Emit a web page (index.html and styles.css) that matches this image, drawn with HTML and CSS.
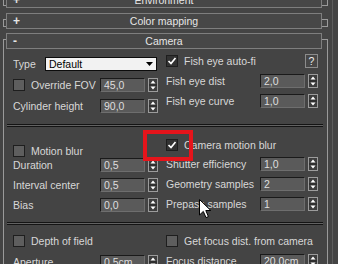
FILE: index.html
```html
<!DOCTYPE html>
<html lang="en">
<head>
    <meta charset="UTF-8">
    <meta name="viewport" content="width=device-width, initial-scale=1.0">
    <title>Camera</title>
    <link rel="stylesheet" href="styles.css">
</head>
<body>
    <div id="panel">
        <div class="rollout rollout-closed" id="env-rollout">
            <div class="rollout-head"><span class="sign">+</span><span class="title">Environment</span></div>
        </div>
        <div class="rollout rollout-closed" id="cmap-rollout">
            <div class="rollout-head"><span class="sign">+</span><span class="title">Color mapping</span></div>
        </div>

        <div class="rollout rollout-open" id="camera-rollout">
            <div class="rollout-head"><span class="sign">-</span><span class="title">Camera</span></div>

            <!-- general -->
            <div class="section" id="general-section">
                <div class="col col-left">
                    <div class="row">
                        <span class="label">Type</span>
                        <div class="dropdown">
                            <span>Default</span>
                            <svg width="7" height="4" viewBox="0 0 7 4"><polygon points="0,0 7,0 3.5,4" fill="#000"/></svg>
                        </div>
                    </div>
                    <div class="row">
                        <span class="check"></span>
                        <span class="label label-check">Override FOV</span>
                        <div class="field">45,0</div>
                        <svg class="spin" width="10" height="14" viewBox="0 0 10 14"><rect x="0.5" y="0.5" width="9" height="13" fill="#3d3d3d" stroke="#9c9c9c"/><line x1="1" y1="7" x2="9" y2="7" stroke="#222"/><polygon points="5,2.5 7.5,5.5 2.5,5.5" fill="#fff"/><polygon points="2.5,8.5 7.5,8.5 5,11.5" fill="#fff"/></svg>
                    </div>
                    <div class="row">
                        <span class="label">Cylinder height</span>
                        <div class="field">90,0</div>
                        <svg class="spin" width="10" height="14" viewBox="0 0 10 14"><rect x="0.5" y="0.5" width="9" height="13" fill="#3d3d3d" stroke="#9c9c9c"/><line x1="1" y1="7" x2="9" y2="7" stroke="#222"/><polygon points="5,2.5 7.5,5.5 2.5,5.5" fill="#fff"/><polygon points="2.5,8.5 7.5,8.5 5,11.5" fill="#fff"/></svg>
                    </div>
                </div>
                <div class="col col-right">
                    <div class="row">
                        <span class="check on"><svg width="10" height="10" viewBox="0 0 10 10"><polyline points="1.5,5 4,7.5 8.5,2" fill="none" stroke="#fff" stroke-width="1.7"/></svg></span>
                        <span class="label label-check">Fish eye auto-fi</span>
                        <div class="help-btn">?</div>
                    </div>
                    <div class="row">
                        <span class="label">Fish eye dist</span>
                        <div class="field">2,0</div>
                        <svg class="spin" width="10" height="14" viewBox="0 0 10 14"><rect x="0.5" y="0.5" width="9" height="13" fill="#3d3d3d" stroke="#9c9c9c"/><line x1="1" y1="7" x2="9" y2="7" stroke="#222"/><polygon points="5,2.5 7.5,5.5 2.5,5.5" fill="#fff"/><polygon points="2.5,8.5 7.5,8.5 5,11.5" fill="#fff"/></svg>
                    </div>
                    <div class="row">
                        <span class="label">Fish eye curve</span>
                        <div class="field">1,0</div>
                        <svg class="spin" width="10" height="14" viewBox="0 0 10 14"><rect x="0.5" y="0.5" width="9" height="13" fill="#3d3d3d" stroke="#9c9c9c"/><line x1="1" y1="7" x2="9" y2="7" stroke="#222"/><polygon points="5,2.5 7.5,5.5 2.5,5.5" fill="#fff"/><polygon points="2.5,8.5 7.5,8.5 5,11.5" fill="#fff"/></svg>
                    </div>
                </div>
            </div>

            <div class="sep"></div>

            <!-- motion blur -->
            <div class="section" id="motion-section">
                <div class="col col-left">
                    <div class="row">
                        <span class="check"></span>
                        <span class="label label-check">Motion blur</span>
                    </div>
                    <div class="row row-tight">
                        <span class="label">Duration</span>
                        <div class="field">0,5</div>
                        <svg class="spin" width="10" height="14" viewBox="0 0 10 14"><rect x="0.5" y="0.5" width="9" height="13" fill="#3d3d3d" stroke="#9c9c9c"/><line x1="1" y1="7" x2="9" y2="7" stroke="#222"/><polygon points="5,2.5 7.5,5.5 2.5,5.5" fill="#fff"/><polygon points="2.5,8.5 7.5,8.5 5,11.5" fill="#fff"/></svg>
                    </div>
                    <div class="row">
                        <span class="label">Interval center</span>
                        <div class="field">0,5</div>
                        <svg class="spin" width="10" height="14" viewBox="0 0 10 14"><rect x="0.5" y="0.5" width="9" height="13" fill="#3d3d3d" stroke="#9c9c9c"/><line x1="1" y1="7" x2="9" y2="7" stroke="#222"/><polygon points="5,2.5 7.5,5.5 2.5,5.5" fill="#fff"/><polygon points="2.5,8.5 7.5,8.5 5,11.5" fill="#fff"/></svg>
                    </div>
                    <div class="row">
                        <span class="label">Bias</span>
                        <div class="field">0,0</div>
                        <svg class="spin" width="10" height="14" viewBox="0 0 10 14"><rect x="0.5" y="0.5" width="9" height="13" fill="#3d3d3d" stroke="#9c9c9c"/><line x1="1" y1="7" x2="9" y2="7" stroke="#222"/><polygon points="5,2.5 7.5,5.5 2.5,5.5" fill="#fff"/><polygon points="2.5,8.5 7.5,8.5 5,11.5" fill="#fff"/></svg>
                    </div>
                </div>
                <div class="col col-right">
                    <div class="row">
                        <span class="check on"><svg width="10" height="10" viewBox="0 0 10 10"><polyline points="1.5,5 4,7.5 8.5,2" fill="none" stroke="#fff" stroke-width="1.7"/></svg></span>
                        <span class="label label-check">Camera motion blur</span>
                    </div>
                    <div class="row">
                        <span class="label">Shutter efficiency</span>
                        <div class="field">1,0</div>
                        <svg class="spin" width="10" height="14" viewBox="0 0 10 14"><rect x="0.5" y="0.5" width="9" height="13" fill="#3d3d3d" stroke="#9c9c9c"/><line x1="1" y1="7" x2="9" y2="7" stroke="#222"/><polygon points="5,2.5 7.5,5.5 2.5,5.5" fill="#fff"/><polygon points="2.5,8.5 7.5,8.5 5,11.5" fill="#fff"/></svg>
                    </div>
                    <div class="row">
                        <span class="label">Geometry samples</span>
                        <div class="field">2</div>
                        <svg class="spin" width="10" height="14" viewBox="0 0 10 14"><rect x="0.5" y="0.5" width="9" height="13" fill="#3d3d3d" stroke="#9c9c9c"/><line x1="1" y1="7" x2="9" y2="7" stroke="#222"/><polygon points="5,2.5 7.5,5.5 2.5,5.5" fill="#fff"/><polygon points="2.5,8.5 7.5,8.5 5,11.5" fill="#fff"/></svg>
                    </div>
                    <div class="row">
                        <span class="label">Prepass samples</span>
                        <div class="field">1</div>
                        <svg class="spin" width="10" height="14" viewBox="0 0 10 14"><rect x="0.5" y="0.5" width="9" height="13" fill="#3d3d3d" stroke="#9c9c9c"/><line x1="1" y1="7" x2="9" y2="7" stroke="#222"/><polygon points="5,2.5 7.5,5.5 2.5,5.5" fill="#fff"/><polygon points="2.5,8.5 7.5,8.5 5,11.5" fill="#fff"/></svg>
                    </div>
                </div>
            </div>

            <div class="sep"></div>

            <!-- depth of field -->
            <div class="section" id="dof-section">
                <div class="col col-left">
                    <div class="row">
                        <span class="check"></span>
                        <span class="label label-check">Depth of field</span>
                    </div>
                    <div class="row">
                        <span class="label">Aperture</span>
                        <div class="field">0,5cm</div>
                        <svg class="spin" width="10" height="14" viewBox="0 0 10 14"><rect x="0.5" y="0.5" width="9" height="13" fill="#3d3d3d" stroke="#9c9c9c"/><line x1="1" y1="7" x2="9" y2="7" stroke="#222"/><polygon points="5,2.5 7.5,5.5 2.5,5.5" fill="#fff"/><polygon points="2.5,8.5 7.5,8.5 5,11.5" fill="#fff"/></svg>
                    </div>
                </div>
                <div class="col col-right">
                    <div class="row">
                        <span class="check"></span>
                        <span class="label label-check">Get focus dist. from camera</span>
                    </div>
                    <div class="row">
                        <span class="label">Focus distance</span>
                        <div class="field">20,0cm</div>
                        <svg class="spin" width="10" height="14" viewBox="0 0 10 14"><rect x="0.5" y="0.5" width="9" height="13" fill="#3d3d3d" stroke="#9c9c9c"/><line x1="1" y1="7" x2="9" y2="7" stroke="#222"/><polygon points="5,2.5 7.5,5.5 2.5,5.5" fill="#fff"/><polygon points="2.5,8.5 7.5,8.5 5,11.5" fill="#fff"/></svg>
                    </div>
                </div>
            </div>
        </div>

        <!-- annotation + mouse pointer drawn over the panel -->
        <div class="highlight"></div>
        <svg class="cursor" width="13" height="20" viewBox="0 0 13 20"><path d="M0.5,0.5 L0.5,16 L4.3,12.4 L7,18.6 L9.4,17.6 L6.8,11.5 L11.8,11.5 Z" fill="#fff" stroke="#000" stroke-width="1"/></svg>
    </div>
    <div id="scroll-track"></div>
</body>
</html>
```

FILE: styles.css
```css
body {
    margin: 0;
    height: 264px;
    overflow: hidden;
    display: flex;
    background-color: #444;
    font-family: "Liberation Sans", Arial, sans-serif;
    font-size: 10.5px;
    color: #d8d8d8;
}

#panel {
    position: relative;
    width: 332px;
    box-sizing: border-box;
    padding: 0 4px 0 3px;
}

#scroll-track {
    flex: 1;
    border-left: 1px solid #5d5d5d;
}

/* rollouts */
.rollout {
    border: 1px solid #9a9a9a;
}

.rollout-closed {
    height: 8px;
    box-sizing: border-box;
}

.rollout-closed .rollout-head {
    margin: -7px 5px -3px 2px;
}

#env-rollout {
    margin-top: -2px;
}

#cmap-rollout {
    margin-top: 13px;
}

#camera-rollout {
    margin-top: 12px;
    border-bottom: none;
    height: 240px;
}

.rollout-open .rollout-head {
    margin: -7px 5px 0 2px;
}

.rollout-head {
    height: 16px;
    box-sizing: border-box;
    border: 1px solid #7e7e7e;
    background-color: #474747;
    display: grid;
    grid-template-columns: 1fr auto 1fr;
    align-items: center;
    line-height: 14px;
    color: #e6e6e6;
}

.sign {
    padding-left: 6px;
    font-size: 12px;
    font-weight: bold;
}

/* sections */
.section {
    display: flex;
    align-items: flex-start;
    gap: 8px;
    padding: 0 9px;
}

.col {
    display: flex;
    flex-direction: column;
    gap: 6px;
}

.col-left {
    width: 145px;
}

.col-right {
    width: 152px;
}

#general-section {
    padding-bottom: 11px;
}

#general-section .col-left {
    padding-top: 8px;
    gap: 7px;
}

#general-section .col-right {
    padding-top: 5px;
}

#motion-section {
    padding-bottom: 10px;
}

#motion-section .col-left {
    padding-top: 17px;
}

#motion-section .col-right {
    padding-top: 11px;
}

#motion-section .col-right .row:first-child {
    margin-bottom: -1px;
}

.row-tight {
    margin-top: -6px;
}

#dof-section .col-left {
    padding-top: 9px;
    gap: 7px;
}

#dof-section .col-right {
    padding-top: 9px;
}

.sep {
    height: 1px;
    margin: 0 4px 0 3px;
    background-color: #626262;
    border-top: 1px solid #141414;
    border-bottom: 1px solid #141414;
}

/* controls */
.row {
    display: flex;
    align-items: center;
    height: 14px;
    line-height: 14px;
}

.label {
    flex: 1;
    white-space: nowrap;
    overflow: hidden;
}

.label-check {
    margin-left: 6px;
}

.check {
    flex: none;
    width: 12px;
    height: 12px;
    box-sizing: border-box;
    border: 1px solid #1e1e1e;
    background-color: #5e5e5e;
    display: flex;
    align-items: center;
    justify-content: center;
}

.check.on {
    background-color: #323232;
}

.field {
    flex: none;
    width: 45px;
    height: 14px;
    box-sizing: border-box;
    padding-left: 3px;
    line-height: 12px;
    background-color: #5a5a5a;
    border: 1px solid #1a1a1a;
    border-right-color: #6e6e6e;
    border-bottom-color: #6e6e6e;
    color: #dedede;
    white-space: nowrap;
    overflow: hidden;
}

.spin {
    flex: none;
    margin-left: 3px;
}

.dropdown {
    flex: none;
    width: 112px;
    height: 14px;
    margin-right: 1px;
    box-sizing: border-box;
    padding: 0 3px;
    display: flex;
    align-items: center;
    justify-content: space-between;
    background-color: #f2f2f2;
    border: 1px solid #0c0c0c;
    color: #000;
}

.help-btn {
    flex: none;
    width: 13px;
    height: 14px;
    box-sizing: border-box;
    border: 1px solid #8c8c8c;
    background-color: #474747;
    text-align: center;
    line-height: 12px;
    color: #eee;
}

/* overlays */
.highlight {
    position: absolute;
    left: 143px;
    top: 130px;
    width: 50px;
    height: 31px;
    box-sizing: border-box;
    border: 4px solid #e5141b;
}

.cursor {
    position: absolute;
    left: 199px;
    top: 199px;
}
```
